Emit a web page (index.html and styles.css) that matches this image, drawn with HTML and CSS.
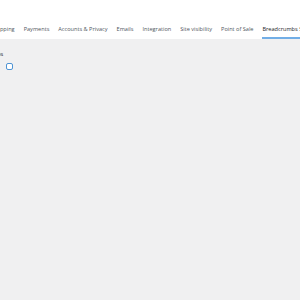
FILE: index.html
```html
<!DOCTYPE html>
<html lang="en">
<head>
  <meta charset="UTF-8">
  <title>Settings</title>
  <link rel="stylesheet" href="styles.css">
</head>
<body>
  <div class="top">
    <nav class="tabs">
      <a class="tab">Shipping</a>
      <a class="tab">Payments</a>
      <a class="tab">Accounts &amp; Privacy</a>
      <a class="tab">Emails</a>
      <a class="tab">Integration</a>
      <a class="tab">Site visibility</a>
      <a class="tab">Point of Sale</a>
      <a class="tab active">Breadcrumbs Settings</a>
    </nav>
  </div>
  <div class="content">
    <div class="row-label">Breadcrumbs</div>
    <div class="row-field">
      <span class="check"></span>
    </div>
  </div>
</body>
</html>
```

FILE: styles.css
```css
body {
  margin: 0;
  background: #f0f0f1;
  font-family: "Open Sans", "Noto Sans", sans-serif;
  overflow: hidden;
}
.top {
  background: #fff;
  height: 39px;
  display: flex;
  align-items: flex-end;
  overflow: hidden;
}
.tabs {
  display: flex;
  gap: 9px;
  margin-left: -8px;
  white-space: nowrap;
}
.tab {
  font-size: 5.6px;
  color: #50575e;
  padding: 0 0 4px;
  border-bottom: 2px solid transparent;
}
.tab.active {
  color: #1d2327;
  border-bottom-color: #72aee6;
}
.content {
  padding-top: 11px;
}
.row-label {
  font-size: 5.6px;
  color: #1d2327;
  margin-left: -32px;
}
.row-field {
  padding: 5px 0 0 6px;
}
.check {
  display: block;
  width: 5px;
  height: 5px;
  border: 1.5px solid #4f94d4;
  border-radius: 2px;
  background: #fff;
}
```
